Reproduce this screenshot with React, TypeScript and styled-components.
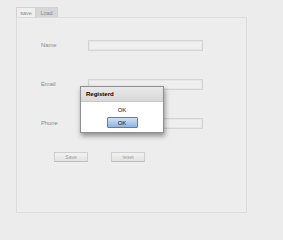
import React from "react";
import styled, { createGlobalStyle } from "styled-components";

const Global = createGlobalStyle`
  html, body { margin: 0; padding: 0; background: #ececec; }
  body { font-family: "Liberation Sans", Arial, sans-serif; }
`;

const Page = styled.div`
  position: relative;
  width: 283px;
  height: 240px;
  padding: 7px 0 0 16px;
  box-sizing: border-box;
`;

const TabBar = styled.div`
  display: flex;
  height: 10px;
`;

const Tab = styled.div<{ $active?: boolean }>`
  width: ${(p) => (p.$active ? 20 : 22)}px;
  height: 10px;
  box-sizing: border-box;
  display: flex;
  align-items: center;
  justify-content: center;
  font-size: 5.5px;
  color: #8a8a8a;
  background: ${(p) => (p.$active ? "#efefef" : "#d6d6d6")};
  border: 1px solid #d2d2d2;
  border-bottom: none;
  ${(p) => (p.$active ? "" : "border-left: none;")}
`;

const Panel = styled.div`
  width: 231px;
  height: 196px;
  box-sizing: border-box;
  border: 1px solid #dcdcdc;
  background: #ededed;
  padding: 22px 0 0 24px;
`;

const Form = styled.div`
  display: grid;
  grid-template-columns: 47px 115px;
  grid-auto-rows: 10px;
  row-gap: 29px;
  align-items: center;
`;

const Label = styled.div`
  font-size: 5.8px;
  color: #8a8a8a;
  line-height: 10px;
`;

const Input = styled.div`
  height: 11px;
  box-sizing: border-box;
  border: 1px solid #d4d4d4;
  background: #efefef;
  box-shadow: inset 0 0 0 1px #e6e6e6;
`;

const Buttons = styled.div`
  display: flex;
  gap: 23px;
  margin: 24px 0 0 13px;
`;

const Button = styled.div`
  width: 34px;
  height: 10px;
  box-sizing: border-box;
  border: 1px solid #cfcfcf;
  border-bottom-color: #bdbdbd;
  background: linear-gradient(#f2f2f2, #e3e3e3);
  font-size: 5px;
  color: #9a9a9a;
  display: flex;
  align-items: center;
  justify-content: center;
`;

const Dialog = styled.div`
  position: absolute;
  left: 80px;
  top: 86px;
  width: 84px;
  height: 47px;
  box-sizing: border-box;
  border: 1px solid #8f8f8f;
  background: #ffffff;
  box-shadow: 1px 3px 5px rgba(0, 0, 0, 0.4);
  display: flex;
  flex-direction: column;
`;

const DialogTitle = styled.div`
  height: 15px;
  box-sizing: border-box;
  background: linear-gradient(#e9e9e9, #d8d8d8);
  border-bottom: 1px solid #c8c8c8;
  padding-left: 5px;
  display: flex;
  align-items: center;
  font-size: 6px;
  font-weight: bold;
  color: #000;
`;

const DialogBody = styled.div`
  display: flex;
  flex-direction: column;
  align-items: center;
  padding-top: 4px;
`;

const Message = styled.div`
  font-size: 6px;
  color: #111;
  line-height: 8px;
`;

const OkButton = styled.div`
  margin-top: 3px;
  width: 31px;
  height: 11px;
  box-sizing: border-box;
  border: 1px solid #5f7fa6;
  border-radius: 1px;
  background: linear-gradient(#cfe2f7, #8fb4e0);
  font-size: 6px;
  color: #111;
  display: flex;
  align-items: center;
  justify-content: center;
`;

export default function App() {
  return (
    <>
      <Global />
      <Page>
        <TabBar>
          <Tab $active>save</Tab>
          <Tab>Load</Tab>
        </TabBar>
        <Panel>
          <Form>
            <Label>Name</Label>
            <Input />
            <Label>Email</Label>
            <Input />
            <Label>Phone</Label>
            <Input />
          </Form>
          <Buttons>
            <Button>Save</Button>
            <Button>reset</Button>
          </Buttons>
        </Panel>
        <Dialog>
          <DialogTitle>Registerd</DialogTitle>
          <DialogBody>
            <Message>OK</Message>
            <OkButton>OK</OkButton>
          </DialogBody>
        </Dialog>
      </Page>
    </>
  );
}
